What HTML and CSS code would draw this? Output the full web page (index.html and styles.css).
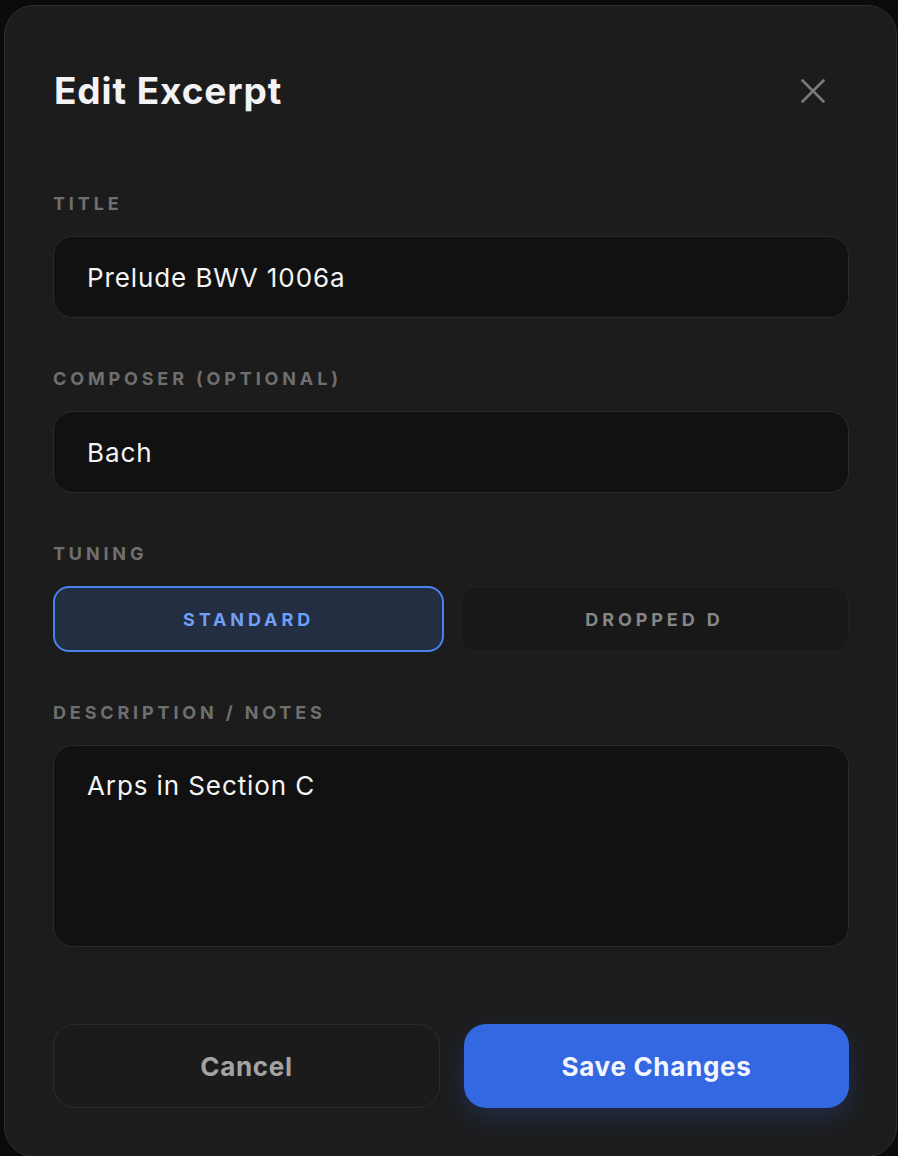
FILE: index.html
```html
<!DOCTYPE html>
<html lang="en">
<head>
<meta charset="utf-8">
<title>Edit Excerpt</title>
<link rel="stylesheet" href="styles.css">
</head>
<body>
<div class="modal">
  <div class="header">
    <h1 class="title">Edit Excerpt</h1>
    <button class="close" aria-label="Close">
      <svg width="24" height="24" viewBox="0 0 24 24" fill="none" stroke="currentColor" stroke-width="2.6" stroke-linecap="round">
        <path d="M1.5 1.5L22.5 22.5M22.5 1.5L1.5 22.5"/>
      </svg>
    </button>
  </div>
  <div class="fields">
    <div class="field">
      <label class="label">Title</label>
      <input class="input" type="text" value="Prelude BWV 1006a">
    </div>
    <div class="field">
      <label class="label">Composer (Optional)</label>
      <input class="input" type="text" value="Bach">
    </div>
    <div class="field">
      <label class="label">Tuning</label>
      <div class="toggle">
        <button class="opt active">Standard</button>
        <button class="opt">Dropped D</button>
      </div>
    </div>
    <div class="field">
      <label class="label">Description / Notes</label>
      <textarea class="textarea">Arps in Section C</textarea>
    </div>
  </div>
  <div class="footer">
    <button class="btn cancel">Cancel</button>
    <button class="btn save">Save Changes</button>
  </div>
</div>
</body>
</html>
```
FILE: styles.css
```css
* { box-sizing: border-box; }
html, body { margin: 0; padding: 0; }
body {
  background: #0b0b0b;
  font-family: Inter, "Noto Sans", sans-serif;
  width: 898px;
  height: 1156px;
  overflow: hidden;
  padding: 5px 0 0 4px;
}
.modal {
  width: 893px;
  background: #1c1c1c;
  border: 1px solid #2f2f2f;
  border-radius: 30px;
  padding: 63px 47px 48px 48px;
}
.header {
  display: flex;
  align-items: center;
  justify-content: space-between;
  height: 44px;
}
.title {
  margin: 0;
  font-size: 37px;
  line-height: 44px;
  font-weight: 700;
  color: #f3f3f5;
  letter-spacing: 0.9px;
  padding-left: 1px;
}
.close {
  background: none;
  border: 0;
  padding: 0;
  width: 24px;
  height: 24px;
  color: #7a7a7a;
  margin-right: 24px;
  display: flex;
}
.fields {
  margin-top: 80px;
  display: flex;
  flex-direction: column;
  gap: 50px;
}
.field {
  display: flex;
  flex-direction: column;
  gap: 21px;
}
.label {
  font-size: 18px;
  line-height: 22px;
  font-weight: 700;
  letter-spacing: 3.85px;
  text-transform: uppercase;
  color: #6f6f6f;
}
.input {
  height: 82px;
  width: 100%;
  background: #111111;
  border: 1px solid #2a2a2a;
  border-radius: 20px;
  padding: 0 32px 0 33px;
  font-family: inherit;
  font-size: 26px;
  letter-spacing: 0.9px;
  color: #f4f4f4;
  outline: none;
}
.toggle {
  display: flex;
  gap: 16px;
}
.opt {
  flex: 1;
  height: 66px;
  border-radius: 16px;
  font-family: inherit;
  font-size: 18px;
  font-weight: 700;
  letter-spacing: 3.9px;
  text-transform: uppercase;
  background: #181818;
  border: 1px solid #212121;
  color: #868686;
  padding: 0;
}
.opt.active {
  background: #232e43;
  border: 2px solid #4b82f0;
  color: #6ea0f6;
}
.textarea {
  height: 202px;
  width: 100%;
  background: #111111;
  border: 1px solid #2a2a2a;
  border-radius: 20px;
  padding: 20px 32px 20px 33px;
  font-family: inherit;
  font-size: 26px;
  line-height: 39px;
  letter-spacing: 0.9px;
  color: #f4f4f4;
  resize: none;
  outline: none;
  display: block;
}
.footer {
  margin-top: 77px;
  display: flex;
  gap: 24px;
}
.btn {
  flex: 1;
  height: 84px;
  border-radius: 22px;
  font-family: inherit;
  font-size: 26px;
  font-weight: 700;
  letter-spacing: 0.7px;
  padding: 0;
}
.cancel {
  background: #1b1b1b;
  border: 1px solid #2c2c2c;
  color: #a3a3a3;
}
.save {
  background: #3468e3;
  border: 0;
  color: #f3f6ff;
  box-shadow: 0 10px 28px rgba(52, 104, 227, 0.22);
}
```
